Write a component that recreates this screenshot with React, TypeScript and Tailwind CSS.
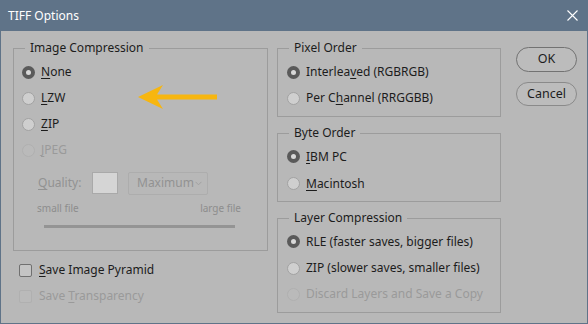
import React from "react";

const font = { fontFamily: '"Noto Sans", "Open Sans", sans-serif' };

function Radio({ checked, disabled }: { checked?: boolean; disabled?: boolean }) {
  if (checked) {
    return (
      <span className="w-[13px] h-[13px] rounded-full bg-[#5a5a5a] flex items-center justify-center shrink-0">
        <span className="w-[5px] h-[5px] rounded-full bg-[#d8d8d8]" />
      </span>
    );
  }
  if (disabled) {
    return <span className="w-[13px] h-[13px] rounded-full border border-[#b0b0b0] bg-[#bababa] shrink-0" />;
  }
  return <span className="w-[13px] h-[13px] rounded-full border border-[#a2a2a2] bg-[#cfcfcf] shrink-0" />;
}

function U({ children }: { children: React.ReactNode }) {
  return <span className="underline underline-offset-[2px] decoration-1">{children}</span>;
}

function Row({
  checked,
  disabled,
  children,
  h = "h-[26px]",
}: {
  checked?: boolean;
  disabled?: boolean;
  children: React.ReactNode;
  h?: string;
}) {
  return (
    <div className={`flex items-center gap-[6px] ${h}`}>
      <Radio checked={checked} disabled={disabled} />
      <span className={disabled ? "text-[#9a9a9a]" : "text-[#1c1c1c]"}>{children}</span>
    </div>
  );
}

function Group({
  title,
  children,
  className = "",
}: {
  title: string;
  children: React.ReactNode;
  className?: string;
}) {
  return (
    <fieldset className={`border border-[#9c9c9c] m-0 p-0 min-w-0 ${className}`}>
      <legend className="ml-[11px] px-[5px] h-[16px] leading-[16px] text-[#1c1c1c]">{title}</legend>
      {children}
    </fieldset>
  );
}

export default function App() {
  return (
    <div
      className="w-[588px] h-[324px] bg-[#5f7388] flex flex-col text-[12px] overflow-hidden relative"
      style={font}
    >
      <div className="h-[31px] flex items-center justify-between pl-[8px] pr-[10px] text-white shrink-0">
        <span className="text-[12px]">TIFF Options</span>
        <svg width="11" height="11" viewBox="0 0 11 11">
          <path d="M0.5 0.5 L10.5 10.5 M10.5 0.5 L0.5 10.5" stroke="#ffffff" strokeWidth="1.1" />
        </svg>
      </div>
      <div className="flex-1 mx-[1px] mb-[1px] bg-[#b8b8b8] flex pt-[9px] pl-[12px]">
        {/* left column */}
        <div className="w-[255px] flex flex-col shrink-0">
          <Group title="Image Compression" className="h-[211px]">
            <div className="pl-[8px] pt-[3px]">
              <Row checked>
                <U>N</U>one
              </Row>
              <Row>
                <U>L</U>ZW
              </Row>
              <Row>
                <U>Z</U>IP
              </Row>
              <Row disabled>
                <U>J</U>PEG
              </Row>
              <div className="flex items-center h-[22px] mt-[9px] pl-[16px] text-[#929292]">
                <span className="w-[54px]">
                  <U>Q</U>uality:
                </span>
                <span className="w-[26px] h-[22px] border border-[#a9a9a9] bg-[#d5d5d5]" />
                <span className="ml-[10px] w-[80px] h-[23px] border border-[#adadad] rounded-[2px] flex items-center justify-between pl-[8px] pr-[5px] text-[#929292] text-[12px]">
                  <span>Maximum</span>
                  <svg width="7" height="5" viewBox="0 0 7 5" className="shrink-0">
                    <path d="M0.5 0.8 L3.5 3.8 L6.5 0.8" stroke="#a0a0a0" fill="none" strokeWidth="1" />
                  </svg>
                </span>
              </div>
              <div className="flex justify-between items-center h-[16px] mt-[6px] pl-[15px] pr-[26px] text-[10px] text-[#8d8d8d]">
                <span>small file</span>
                <span>large file</span>
              </div>
              <div className="mt-[9px] ml-[22px] w-[191px] h-[3px] bg-[#949494]" />
            </div>
          </Group>
          <div className="mt-[6px] pl-[6px]">
            <div className="flex items-center gap-[7px] h-[26px]">
              <span className="w-[13px] h-[13px] rounded-[2px] border border-[#707070] bg-[#c4c4c4]" />
              <span className="text-[#1c1c1c]">
                <U>S</U>ave Image Pyramid
              </span>
            </div>
            <div className="flex items-center gap-[7px] h-[26px]">
              <span className="w-[13px] h-[13px] rounded-[2px] border border-[#b0b0b0] bg-[#bababa]" />
              <span className="text-[#9a9a9a]">
                Save <U>T</U>ransparency
              </span>
            </div>
          </div>
        </div>
        {/* middle column */}
        <div className="w-[224px] ml-[9px] flex flex-col shrink-0">
          <Group title="Pixel Order" className="h-[77px]">
            <div className="pl-[9px] pt-[3px]">
              <Row checked>
                Interlea<U>v</U>ed (RGBRGB)
              </Row>
              <Row>
                Per C<U>h</U>annel (RRGGBB)
              </Row>
            </div>
          </Group>
          <Group title="Byte Order" className="h-[77px] mt-[8px]">
            <div className="pl-[9px] pt-[2px]">
              <Row checked h="h-[27px]">
                <U>I</U>BM PC
              </Row>
              <Row h="h-[27px]">
                <U>M</U>acintosh
              </Row>
            </div>
          </Group>
          <Group title="Layer Compression" className="h-[103px] mt-[8px]">
            <div className="pl-[9px] pt-[2px]">
              <Row checked h="h-[27px]">
                RLE (faster saves, bigger files)
              </Row>
              <Row h="h-[26px]">ZIP (slower saves, smaller files)</Row>
              <Row disabled h="h-[26px]">
                Discard Layers and Save a Copy
              </Row>
            </div>
          </Group>
        </div>
        {/* buttons */}
        <div className="ml-[15px] pt-[7px] flex flex-col gap-[10px]">
          <button className="w-[61px] h-[25px] rounded-full border border-[#727272] bg-[#bcbcbc] text-[#1c1c1c] text-[12.5px]">
            OK
          </button>
          <button className="w-[61px] h-[24px] rounded-full border border-[#8a8a8a] bg-[#bcbcbc] text-[#1c1c1c] text-[12.5px]">
            Cancel
          </button>
        </div>
      </div>
      <svg className="absolute left-[136px] top-[83px]" width="84" height="30" viewBox="0 0 84 30">
        <path d="M2 14 L27 2 L21 11.5 L81 11.5 L81 16.5 L21 16.5 L27 26 Z" fill="#f7b60f" />
      </svg>
    </div>
  );
}
